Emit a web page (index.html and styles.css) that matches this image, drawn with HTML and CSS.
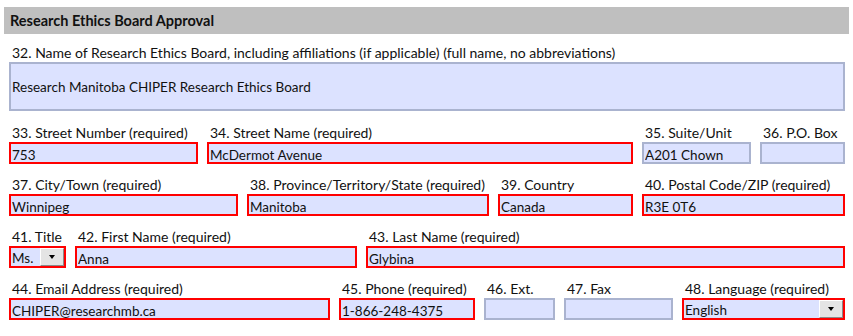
FILE: index.html
```html
<!doctype html>
<html>
<head>
<title>Research Ethics Board Approval</title>
<link rel="stylesheet" href="styles.css">
</head>
<body>
<form id="reb">
	<div class="section-title">Research Ethics Board Approval</div>
	<div class="fields">
		<div class="row first">
			<label class="field w-full"><span class="cap">32. Name of Research Ethics Board, including affiliations (if applicable) (full name, no abbreviations)</span>
				<input type="text" class="box tall" value="Research Manitoba CHIPER Research Ethics Board"></label>
		</div>
		<div class="row">
			<label class="field w-189"><span class="cap">33. Street Number (required)</span><input type="text" class="box req" value="753"></label>
			<label class="field w-426"><span class="cap">34. Street Name (required)</span><input type="text" class="box req" value="McDermot Avenue"></label>
			<label class="field w-109"><span class="cap">35. Suite/Unit</span><input type="text" class="box" value="A201 Chown"></label>
			<label class="field w-85"><span class="cap">36. P.O. Box</span><input type="text" class="box" value=""></label>
		</div>
		<div class="row">
			<label class="field w-229"><span class="cap">37. City/Town (required)</span><input type="text" class="box req" value="Winnipeg"></label>
			<label class="field w-242"><span class="cap">38. Province/Territory/State (required)</span><input type="text" class="box req" value="Manitoba"></label>
			<label class="field w-135"><span class="cap">39. Country</span><input type="text" class="box req" value="Canada"></label>
			<label class="field w-203"><span class="cap">40. Postal Code/ZIP (required)</span><input type="text" class="box req" value="R3E 0T6"></label>
		</div>
		<div class="row">
			<div class="field w-57"><span class="cap">41. Title</span>
				<div class="box req select"><span class="val">Ms.</span><span class="drop"></span></div></div>
			<label class="field w-282"><span class="cap">42. First Name (required)</span><input type="text" class="box req" value="Anna"></label>
			<label class="field w-479"><span class="cap">43. Last Name (required)</span><input type="text" class="box req" value="Glybina"></label>
		</div>
		<div class="row">
			<label class="field w-321"><span class="cap">44. Email Address (required)</span><input type="text" class="box req" value="CHIPER@researchmb.ca"></label>
			<label class="field w-136"><span class="cap">45. Phone (required)</span><input type="text" class="box req" value="1-866-248-4375"></label>
			<label class="field w-71"><span class="cap">46. Ext.</span><input type="text" class="box" value=""></label>
			<label class="field w-109"><span class="cap">47. Fax</span><input type="text" class="box" value=""></label>
			<div class="field w-163"><span class="cap">48. Language (required)</span>
				<div class="box req select"><span class="val">English</span><span class="drop"></span></div></div>
		</div>
	</div>
</form>
</body>
</html>
```

FILE: styles.css
```css
body {
  margin: 0;
  padding: 7px 4px 0;
  font-family: Lato, "Liberation Sans", sans-serif;
  font-size: 13.5px;
  color: #111;
  background: #fff;
}

.section-title {
  width: 845px;
  height: 27px;
  box-sizing: border-box;
  padding-left: 6px;
  line-height: 27px;
  background: #bfbfbf;
  font-size: 14.5px;
  font-weight: bold;
}

.fields {
  width: 836px;
  padding: 10px 0 0 5px;
  display: flex;
  flex-direction: column;
  gap: 12px;
}
.row {
  display: flex;
  gap: 9px;
}
.row.first {
  margin-bottom: 1px;
}

.field {
  display: flex;
  flex-direction: column;
  flex: none;
}
.cap {
  height: 18px;
  line-height: 18px;
  padding-left: 3px;
  font-size: 14px;
  white-space: nowrap;
}

.box {
  width: 100%;
  height: 22px;
  box-sizing: border-box;
  margin: 0;
  padding: 3px 1px 0;
  border: 2px solid #aab3cf;
  background: #dce2ff;
  font: inherit;
  color: inherit;
  outline: none;
}
.box.req {
  border-color: #f00;
}
.box.tall {
  height: 49px;
  padding-top: 1px;
}

.select {
  display: flex;
  padding: 0 0 0 1px;
}
.select .val {
  flex: 1;
  line-height: 20px;
}
.drop {
  width: 24px;
  flex: none;
  box-sizing: border-box;
  background: #e4e4e4;
  border: 1px solid;
  border-color: #fff #8a8a8a #8a8a8a #fff;
  display: flex;
  align-items: center;
  justify-content: center;
}
.drop::after {
  content: "";
  border-left: 3.5px solid transparent;
  border-right: 3.5px solid transparent;
  border-top: 4px solid #000;
}

.w-full { width: 836px; }
.w-57 { width: 57px; }
.w-71 { width: 71px; }
.w-85 { width: 85px; }
.w-109 { width: 109px; }
.w-135 { width: 135px; }
.w-136 { width: 136px; }
.w-163 { width: 163px; }
.w-189 { width: 189px; }
.w-203 { width: 203px; }
.w-229 { width: 229px; }
.w-242 { width: 242px; }
.w-282 { width: 282px; }
.w-321 { width: 321px; }
.w-426 { width: 426px; }
.w-479 { width: 479px; }
```
